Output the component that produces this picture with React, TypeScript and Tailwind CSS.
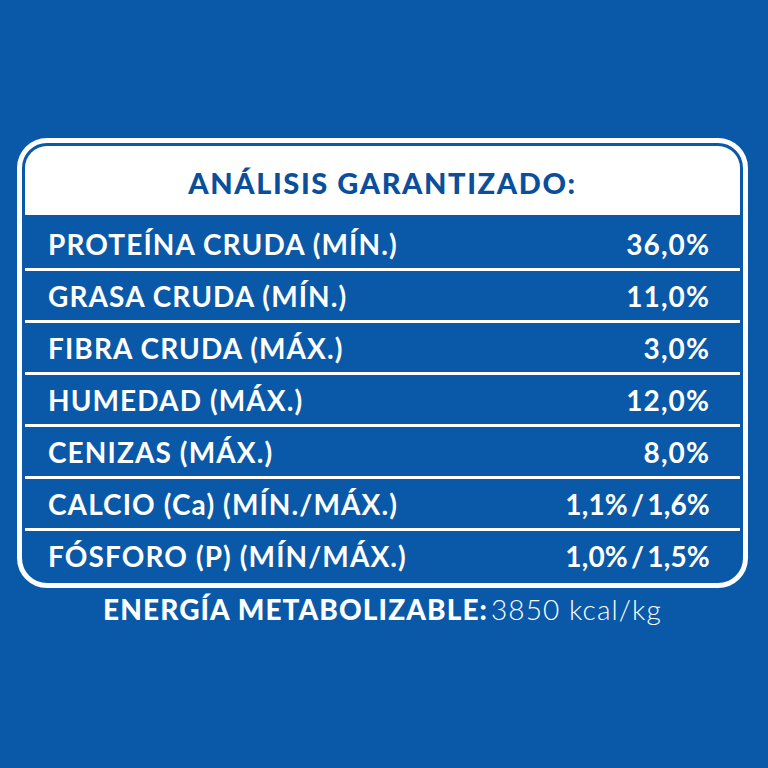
import React from "react";

const rows: [string, string][] = [
  ["PROTEÍNA CRUDA (MÍN.)", "36,0%"],
  ["GRASA CRUDA (MÍN.)", "11,0%"],
  ["FIBRA CRUDA (MÁX.)", "3,0%"],
  ["HUMEDAD (MÁX.)", "12,0%"],
  ["CENIZAS (MÁX.)", "8,0%"],
  ["CALCIO (Ca) (MÍN./MÁX.)", "1,1%/1,6%"],
  ["FÓSFORO (P) (MÍN/MÁX.)", "1,0%/1,5%"],
];

function Value({ v }: { v: string }) {
  const parts = v.split("/");
  if (parts.length === 1) return <span>{v}</span>;
  return (
    <span className="tracking-[0.2px]">
      {parts[0]}
      <span className="mx-[3px]">/</span>
      {parts[1]}
    </span>
  );
}

export default function App() {
  return (
    <div
      className="w-[768px] h-[768px] bg-[#0a59a8] overflow-hidden pt-[138px] pl-[17px]"
      style={{ fontFamily: "Lato, 'Open Sans', sans-serif" }}
    >
      <div className="w-[731px] h-[450px] border-[5px] border-white rounded-[30px] pt-[3px] px-[3px] flex flex-col">
        <div className="h-[69px] bg-white rounded-t-[22px] flex items-center justify-center">
          <span className="text-[#0b4e9b] font-black text-[29px] leading-none pt-[4px] tracking-[1.6px]">
            ANÁLISIS GARANTIZADO:
          </span>
        </div>
        <div className="flex flex-col">
          {rows.map(([label, value], i) => (
            <div
              key={label}
              className={
                i === 0
                  ? "h-[53px] flex items-center justify-between pl-[23px] pr-[30px] text-white font-bold text-[28px] leading-none pt-[4px] tracking-[1.1px]"
                  : i === rows.length - 1
                  ? "h-[55px] border-t-[3px] border-white flex items-center justify-between pl-[23px] pr-[30px] text-white font-bold text-[28px] leading-none pb-[3px] tracking-[1.1px]"
                  : "h-[52px] border-t-[3px] border-white flex items-center justify-between pl-[23px] pr-[30px] text-white font-bold text-[28px] leading-none tracking-[1.1px]"
              }
            >
              <span>{label}</span>
              <Value v={value} />
            </div>
          ))}
        </div>
      </div>
      <div className="w-[731px] mt-[5px] flex justify-center items-baseline text-white text-[28px] leading-[32px] tracking-[1.1px]">
        <span className="font-black">ENERGÍA METABOLIZABLE:</span>
        <span className="font-light ml-[3px]">3850 kcal/kg</span>
      </div>
    </div>
  );
}
